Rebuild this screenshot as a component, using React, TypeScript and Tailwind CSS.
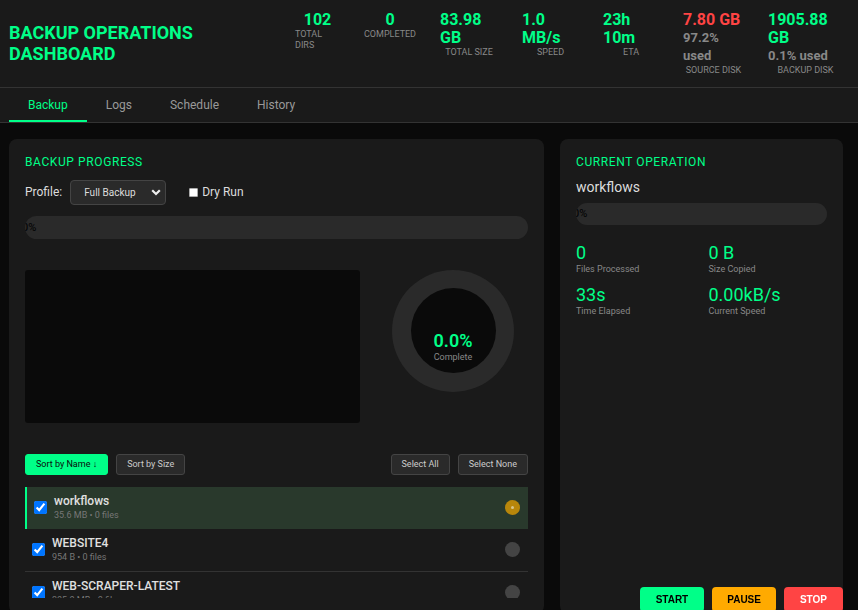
import React from "react";

const headerStats = [
  { value: "102", label: "Total Dirs", w: "w-[45px]", valueCls: "text-center", labelCls: "text-left" },
  { value: "0", label: "Completed", w: "w-[52px]", valueCls: "text-center", labelCls: "text-center" },
  { value: "83.98 GB", label: "Total Size", w: "w-[58px]", valueCls: "text-left", labelCls: "text-center" },
  { value: "1.0 MB/s", label: "Speed", w: "w-[57px]", valueCls: "text-left", labelCls: "text-center" },
  { value: "23h 10m", label: "ETA", w: "w-[56px]", valueCls: "text-left", labelCls: "text-center" },
  { value: "7.80 GB", sub: "97.2% used", label: "Source Disk", w: "w-[61px]", valueCls: "text-left text-[#ff4444]", labelCls: "text-center" },
  { value: "1905.88 GB", sub: "0.1% used", label: "Backup Disk", w: "w-[75px]", valueCls: "text-left", labelCls: "text-center" },
];

const tabs = ["Backup", "Logs", "Schedule", "History"];

const dirs = [
  { name: "workflows", meta: "35.6 MB • 0 files", active: true },
  { name: "WEBSITE4", meta: "954 B • 0 files" },
  { name: "WEB-SCRAPER-LATEST", meta: "305.0 MB • 0 files" },
  { name: "PORTFOLIO", meta: "12.1 MB • 0 files" },
];

const opStats = [
  { value: "0", label: "Files Processed" },
  { value: "0 B", label: "Size Copied" },
  { value: "33s", label: "Time Elapsed" },
  { value: "0.00kB/s", label: "Current Speed" },
];

const ProgressBar = ({ h }: { h: string }) => (
  <div className={`${h} rounded-full bg-[#2a2a2a] overflow-hidden flex items-center`}>
    <span className="-ml-[3px] text-[11px] text-black">0%</span>
  </div>
);

const DirRow = ({ dir }: { dir: (typeof dirs)[number] }) => (
  <div
    className={`flex items-center gap-[7px] pl-[7px] pr-[8px] py-[6.5px] ${
      dir.active ? "bg-[#29392c] border-l-2 border-[#00ff88]" : "border-b border-[#333]"
    }`}
  >
    <input type="checkbox" defaultChecked className="w-[13px] h-[13px] shrink-0" />
    <div className="flex-1 min-w-0">
      <p className="text-[12px] leading-[16px] font-medium text-[#e0e0e0]">{dir.name}</p>
      <p className="text-[9px] leading-[13px] text-[#777]">{dir.meta}</p>
    </div>
    <div
      className={`w-[15px] h-[15px] rounded-full flex items-center justify-center ${
        dir.active ? "bg-[#b8860b]" : "bg-[#444]"
      }`}
    >
      {dir.active && <div className="w-[3px] h-[3px] rounded-full bg-[#d8c58c]" />}
    </div>
  </div>
);

export default function App() {
  return (
    <div className="min-h-screen bg-[#0a0a0a] text-[#ddd] leading-[normal] font-['Roboto',sans-serif]">
      {/* header */}
      <header className="flex items-center justify-between pl-[9px] pr-[15px] py-[11px] bg-[#1a1a1a] border-b border-[#333]">
        <h1 className="max-w-[230px] text-[18px] leading-[21px] font-bold text-[#00ff88]">
          BACKUP OPERATIONS DASHBOARD
        </h1>
        <div className="flex items-start gap-6">
          {headerStats.map((s) => (
            <div key={s.label} className={`${s.w} shrink-0`}>
              <div className={`text-[16px] leading-[18px] font-bold text-[#00ff88] ${s.valueCls}`}>
                {s.value}
                {s.sub && <div className="text-[13px] leading-[18px] text-[#888]">{s.sub}</div>}
              </div>
              <div className={`text-[9px] leading-[10.5px] uppercase text-[#888] ${s.labelCls}`}>{s.label}</div>
            </div>
          ))}
        </div>
      </header>

      {/* tabs */}
      <nav className="flex pl-[9px] bg-[#1a1a1a] border-b border-[#333]">
        {tabs.map((t, i) => (
          <div
            key={t}
            className={`px-[19px] pt-[10px] pb-[8px] text-[12px] leading-[14px] border-b-2 ${
              i === 0 ? "text-[#00ff88] border-[#00ff88]" : "text-[#999] border-transparent"
            }`}
          >
            {t}
          </div>
        ))}
      </nav>

      <main className="flex gap-4 pl-[9px] pt-4">
        {/* backup progress */}
        <section className="w-[535px] shrink-0 rounded-lg bg-[#1a1a1a] p-4">
          <h2 className="text-[12px] leading-[14px] tracking-[0.6px] text-[#00ff88]">BACKUP PROGRESS</h2>

          <div className="mt-[11px] flex items-center h-[25px] text-[12px]">
            <span className="text-[#ddd]">Profile:</span>
            <div className="ml-2 w-[96px] h-[25px] flex items-center justify-between pl-[13px] pr-[4px] rounded-[4px] bg-[#2a2a2a] border border-[#444]">
              <span className="text-[10px] text-[#ddd]">Full Backup</span>
              <svg width="10" height="7" viewBox="0 0 10 7">
                <polyline points="1.2,1.2 5,5 8.8,1.2" fill="none" stroke="#eee" strokeWidth="2.2" />
              </svg>
            </div>
            <span className="ml-[23px] w-[9px] h-[9px] bg-white border border-[#aaa] rounded-[1px]" />
            <span className="ml-[4px] text-[#ddd]">Dry Run</span>
          </div>

          <div className="mt-[11px]">
            <ProgressBar h="h-[23px]" />
          </div>

          <div className="mt-[31px] flex items-start">
            <div className="w-[335px] h-[153px] rounded-[3px] bg-[#0a0a0a]" />
            <div className="ml-[32px] w-[122px] h-[122px] rounded-full bg-[#2a2a2a] flex items-center justify-center">
              <div className="w-[85px] h-[85px] rounded-full bg-[#0a0a0a] flex flex-col items-center justify-center pt-[31px]">
                <span className="text-[18px] leading-[23px] font-semibold text-[#00ff88]">0.0%</span>
                <span className="text-[9px] leading-[11px] text-[#888]">Complete</span>
              </div>
            </div>
          </div>

          <div className="mt-[31px] flex items-center justify-between text-[9px]">
            <div className="flex gap-2">
              <button className="h-[21px] px-[10px] rounded-[3px] bg-[#00ff88] border border-[#00ff88] text-[#0a0a0a]">
                Sort by Name ↓
              </button>
              <button className="h-[21px] px-[10px] rounded-[3px] bg-[#2a2a2a] border border-[#444] text-[#ccc]">
                Sort by Size
              </button>
            </div>
            <div className="flex gap-2">
              <button className="h-[21px] px-[10px] rounded-[3px] bg-[#2a2a2a] border border-[#444] text-[#ccc]">
                Select All
              </button>
              <button className="h-[21px] px-[10px] rounded-[3px] bg-[#2a2a2a] border border-[#444] text-[#ccc]">
                Select None
              </button>
            </div>
          </div>

          <div className="mt-3 max-h-[111px] overflow-hidden">
            {dirs.map((d) => (
              <DirRow key={d.name} dir={d} />
            ))}
          </div>
        </section>

        {/* current operation */}
        <section className="w-[283px] shrink-0 rounded-lg bg-[#1a1a1a] p-4">
          <h2 className="text-[12px] leading-[14px] tracking-[0.6px] text-[#00ff88]">CURRENT OPERATION</h2>
          <p className="mt-[10px] text-[14px] text-[#ddd]">workflows</p>
          <div className="mt-[8px]">
            <ProgressBar h="h-[22px]" />
          </div>
          <div className="mt-[17px] grid grid-cols-2 gap-x-[14px] gap-y-[10px]">
            {opStats.map((s) => (
              <div key={s.label}>
                <div className="text-[18px] text-[#00ff88]">{s.value}</div>
                <div className="mt-[1px] text-[9px] text-[#888]">{s.label}</div>
              </div>
            ))}
          </div>
        </section>
      </main>

      {/* controls */}
      <div className="fixed right-[15px] bottom-[-2px] flex gap-2 font-['Liberation_Sans',sans-serif] text-[10px] font-bold">
        <button className="h-[25px] px-[16px] rounded-[4px] bg-[#00ff88] text-black">START</button>
        <button className="h-[25px] px-[15px] rounded-[4px] bg-[#ffaa00] text-black">PAUSE</button>
        <button className="h-[25px] px-[16px] rounded-[4px] bg-[#ff4444] text-white">STOP</button>
      </div>
    </div>
  );
}
